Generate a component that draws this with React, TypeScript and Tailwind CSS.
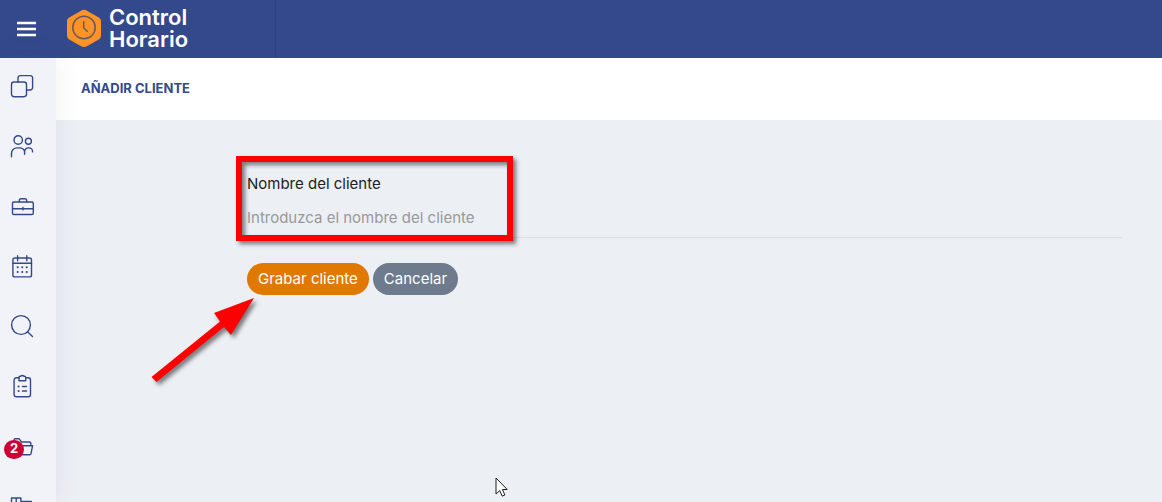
import type { ReactNode } from "react";

function NavIcon({ children }: { children: ReactNode }) {
  return (
    <svg
      viewBox="0 0 24 24"
      className="size-6"
      fill="none"
      stroke="currentColor"
      strokeWidth="1.4"
      strokeLinecap="round"
      strokeLinejoin="round"
      aria-hidden="true"
    >
      {children}
    </svg>
  );
}

const items: { label: string; icon: ReactNode; badge?: number }[] = [
  {
    label: "Panel",
    icon: (
      <>
        <rect x="1.5" y="8" width="15" height="14.7" rx="2.6" />
        <path d="M8 8V4a2.4 2.4 0 0 1 2.4-2.4h9.8A2.4 2.4 0 0 1 22.6 4v9.6a2.4 2.4 0 0 1-2.4 2.4h-3.7" />
      </>
    ),
  },
  {
    label: "Personal",
    icon: (
      <>
        <circle cx="8.2" cy="6" r="4.2" />
        <circle cx="18.4" cy="7.300" r="3" />
        <path d="M1.500 22.800V19.300a5.400 5.400 0 0 1 5.400-5.400h2.700A5.400 5.400 0 0 1 14.600 17.500V20.300M14.600 17.500c.4-2.200 1.800-3.600 4-3.600 2.500 0 4 1.500 4 4" />
      </>
    ),
  },
  {
    label: "Clientes",
    icon: (
      <>
        <rect x="2.500" y="8" width="20.800" height="12.500" rx="1.300" />
        <path d="M9.300 8V6.500c0-1 .7-1.800 1.800-1.800h3.800c1 0 1.800.8 1.800 1.800V8M2.500 14.700h20.800M13 13.500v2.400" />
      </>
    ),
  },
  {
    label: "Calendario",
    icon: (
      <>
        <rect x="2.900" y="4" width="18.600" height="18.900" rx="2" />
        <path d="M2.900 9.200h18.600M7.600 1.800v5M16.800 1.800v5" />
        <path
          d="M7.600 13.300h.1M12.200 13.300h.1M16.700 13.300h.1M7.600 17.900h.1M12.200 17.900h.1M16.700 17.900h.1"
          strokeWidth="2"
        />
      </>
    ),
  },
  {
    label: "Buscar",
    icon: (
      <>
        <circle cx="11" cy="11" r="9.400" />
        <path d="m17.500 17.800 5 4.700" />
      </>
    ),
  },
  {
    label: "Informes",
    icon: (
      <>
        <path d="M9 3.800H6.400a2.300 2.300 0 0 0-2.300 2.300v14.300a2.300 2.300 0 0 0 2.300 2.300h11.800a2.300 2.300 0 0 0 2.300-2.300V6.100a2.300 2.300 0 0 0-2.300-2.300h-2.500" />
        <path d="M9 3.200c0-.6.4-1 1-1h.9c.5-.9 2.300-.9 2.800 0h1c.6 0 1 .4 1 1v3.500H9zM12.500 12.500h4M12.500 17h4" />
        <path d="M8.500 12.500h.1M8.500 17h.1" strokeWidth="2" />
      </>
    ),
  },
  {
    label: "Documentos",
    badge: 2,
    icon: (
      <path d="M4 20.500V6c0-.7.5-1.200 1.200-1.200h4l2.300 3.200h8c.8 0 1.300.5 1.300 1.300v2.400M4 20.500l3.400-8.800h15.200l-1.600 8c-.2.800-.6 1.100-1.300 1.100H4.500" />
    ),
  },
  {
    label: "Inventario",
    icon: <path d="M1.500 21V4h9.400v5.300H1.500M6.200 4v5.300M10.900 7.500h10.500V21" />,
  },
];

function Logo() {
  return (
    <a href="#" className="flex h-full w-[220px] items-center gap-[7px] border-r border-[#2c417f] pl-2.5">
      <svg viewBox="0 0 36 40" className="h-10 w-9 shrink-0" fill="none" aria-hidden="true">
        <path
          d="M14.700 2Q18-.3 21.300 2L32.800 8.400q2.200 1.300 2.200 3.800v14.400q0 2.500-2.200 3.800l-11.500 6.500q-3.300 2.200-6.600 0L3.200 30.400Q1 29.100 1 26.600V12.200Q1 9.700 3.200 8.400z"
          fill="#ff9326"
        />
        <circle cx="18" cy="18.500" r="11.200" stroke="#6a5860" strokeWidth="1.500" />
        <path d="M17.700 12.200v6.500l4 4" stroke="#6a5860" strokeWidth="1.500" />
      </svg>
      <span className="pb-[3px] text-[22px] leading-[22px] font-semibold text-white">
        <span className="block">Control</span>
        <span className="block">Horario</span>
      </span>
    </a>
  );
}

export default function App() {
  return (
    <div className="flex h-screen flex-col overflow-hidden bg-[#eceff4] font-['Inter','Liberation_Sans',sans-serif]">
      <header className="flex h-[58px] shrink-0 items-center bg-[#34498c]">
        <button type="button" aria-label="Menú" className="flex w-14 shrink-0 justify-center pr-1">
          <svg viewBox="0 0 20 16" className="h-4 w-5" aria-hidden="true">
            <path d="M1 2h19M1 8h19M1 14h19" stroke="#fff" strokeWidth="2.400" />
          </svg>
        </button>
        <Logo />
      </header>

      <div className="flex min-h-0 flex-1">
        <nav className="z-10 flex w-14 shrink-0 flex-col gap-9 overflow-hidden bg-[#f2f3f8] pt-4 pl-2.5 text-[#34498c] shadow-[0_0_28px_rgba(82,63,105,0.08)]">
          {items.map((item) => (
            <a key={item.label} href="#" aria-label={item.label} className="relative size-6 shrink-0">
              <NavIcon>{item.icon}</NavIcon>
              {item.badge && (
                <span className="absolute top-1.5 -left-1.5 flex h-[19px] w-5 items-center justify-center rounded-full bg-[#cc0033] pb-0.5 text-[13px] leading-none font-bold text-white">
                  {item.badge}
                </span>
              )}
            </a>
          ))}
        </nav>

        <main className="min-w-0 flex-1">
          <div className="flex h-[62px] items-center bg-white pl-[25px]">
            <h1 className="text-[13px] font-bold text-[#34498c]">AÑADIR CLIENTE</h1>
          </div>

          <form className="relative pt-[54px] pr-10 pl-[191px]">
            <label htmlFor="cliente" className="block text-[15px] leading-5 text-[#222222]">
              Nombre del cliente
            </label>
            <input
              id="cliente"
              type="text"
              placeholder="Introduzca el nombre del cliente"
              className="mt-1 block h-10 w-full border-b border-[#dcdfe6] bg-transparent text-[15px] text-[#333333] outline-none placeholder:text-[#999999]"
            />
            <div className="mt-[25px] flex gap-1">
              <button type="submit" className="h-8 rounded-full bg-[#e17800] px-[11px] text-[15px] text-white">
                Grabar cliente
              </button>
              <button type="button" className="h-8 rounded-full bg-[#6e7b8d] px-[11px] text-[15px] text-white">
                Cancelar
              </button>
            </div>

            <div className="pointer-events-none absolute top-9 left-[180px] h-[85px] w-[277px] border-6 border-[#ff0000] drop-shadow-[3px_3px_2px_rgba(0,0,0,0.5)]" />
            <svg
              viewBox="0 0 110 96"
              className="pointer-events-none absolute top-[174px] left-[92px] h-24 w-[110px] drop-shadow-[3px_3px_2px_rgba(0,0,0,0.5)]"
              aria-hidden="true"
            >
              <path d="M3.500 83 72 27.500 66 19 106 4 83 41 76 33 8.500 88z" fill="#ff0000" />
            </svg>
          </form>
        </main>
      </div>

      <svg viewBox="0 0 14 22" className="pointer-events-none absolute top-[477px] left-[495px] h-[22px] w-3.5" aria-hidden="true">
        <path
          d="M1 1v16l3.700-3.500 2.500 5.600 2.700-1.100-2.500-5.500h4.800z"
          fill="#fff"
          stroke="#1b1b2b"
          strokeWidth="1"
        />
      </svg>
    </div>
  );
}
